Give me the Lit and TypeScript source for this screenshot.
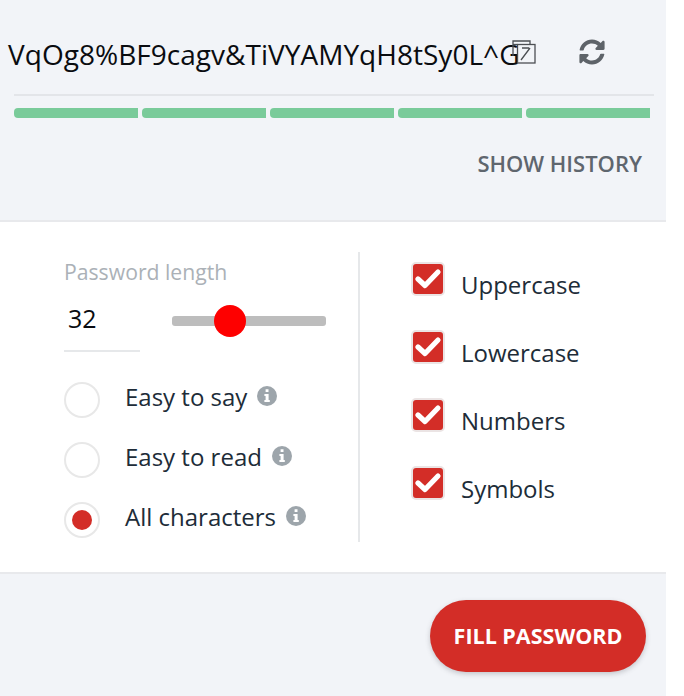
import { LitElement, html, css, svg } from "lit";
import { customElement } from "lit/decorators.js";

const info = html`<svg class="info" viewBox="0 0 20 20" aria-hidden="true">
  <circle cx="10" cy="10" r="10" fill="#9da5ab"></circle>
  <path fill="#fff" d="M8.6 3.2h2.9v2.9H8.6zM7.4 7.9h4.2v6.2h1.2v2H7.4v-2h1.2V9.900H7.400z"></path>
</svg>`;

const check = svg`<path d="M5 15 L12 21.500 L25 8" fill="none" stroke="#fff" stroke-width="5.2" stroke-linecap="round" stroke-linejoin="round"></path>`;

@customElement("app-root")
export class AppRoot extends LitElement {
  static styles = css`
    :host {
      display: block;
      width: 684px;
      height: 696px;
      background: #fff;
      font-family: "Open Sans", "Liberation Sans", sans-serif;
      overflow: hidden;
    }
    .panel { width: 666px; height: 696px; display: flex; flex-direction: column; }
    .head {
      height: 222px;
      box-sizing: border-box;
      background: #f2f4f8;
      border-bottom: 2px solid #e8e9ec;
      flex: none;
    }
    .pwrow { height: 94px; margin: 0 12px 0 14px; border-bottom: 2px solid #e3e5e9; position: relative; }
    .pw { position: absolute; left: -6px; top: 35px; font-size: 28px; letter-spacing: 0.03px; line-height: 38px; color: #0a0c10; white-space: nowrap; }
    .copy { position: absolute; left: 498px; top: 40px; width: 24px; height: 24px; }
    .refresh { position: absolute; left: 565px; top: 39px; width: 26px; height: 26px; }
    .bars { display: flex; gap: 4px; margin: 12px 16px 0 14px; }
    .bar { width: 124px; height: 10px; background: #7acb9a; border-radius: 4px 0 0 4px; }
    .hist {
      text-align: right; margin: 29px 24px 0 0; font-size: 22px; line-height: 32px;
      font-weight: 600; color: #5f666e;
    }
    .mid { height: 352px; flex: none; background: #fff; border-bottom: 2px solid #e8e9ec; box-sizing: border-box; display: flex; padding-top: 30px; }
    .left { width: 296px; margin-left: 64px; height: 290px; box-sizing: border-box; border-right: 2px solid #e6e8ea; }
    .label { font-size: 21.200px; line-height: 28px; color: #abb1b7; margin-top: 6px; white-space: nowrap; }
    .lenrow { display: flex; align-items: flex-start; height: 66px; }
    .len { width: 76px; height: 66px; box-sizing: border-box; border-bottom: 2px solid #e6e8ea; font-size: 25px; line-height: 36px; color: #0a0c10; padding-left: 4px; padding-top: 14px; flex: none; }
    .slider { margin-left: 32px; width: 154px; height: 10px; margin-top: 30px; background: #bdbdbd; border-radius: 3px; position: relative; flex: none; }
    .thumb { position: absolute; left: 42px; top: -11px; width: 32px; height: 32px; border-radius: 50%; background: #fe0000; }
    .radios { display: flex; flex-direction: column; margin-top: 30px; gap: 24px; }
    .radio { display: flex; align-items: center; height: 36px; font-size: 24px; color: #202c38; white-space: nowrap; }
    .dot { width: 36px; height: 36px; box-sizing: border-box; border: 2px solid #e8e8e8; border-radius: 50%; margin-right: 25px; flex: none; display: flex; align-items: center; justify-content: center; }
    .dot i { width: 20px; height: 20px; border-radius: 50%; background: #d32d27; display: block; }
    .radio span { position: relative; top: -4px; }
    .info { width: 20px; height: 20px; margin-left: 10px; position: relative; top: -4px; flex: none; }
    .right { display: flex; flex-direction: column; padding: 10px 0 0 51px; gap: 34px; }
    .ck { display: flex; height: 34px; font-size: 24px; color: #202c38; white-space: nowrap; }
    .box { width: 34px; height: 34px; box-sizing: border-box; border: 2px solid #ebe4e4; border-radius: 5px; background: #d32d27; flex: none; margin-right: 16px; }
    .box svg { display: block; width: 30px; height: 30px; }
    .ck span { line-height: 36px; margin-top: 5px; }
    .foot { flex: 1; background: #f2f4f8; display: flex; justify-content: flex-end; padding: 26px 20px 0 0; align-items: flex-start; }
    .fill {
      height: 72px; width: 216px; box-sizing: border-box; padding-bottom: 2px; border-radius: 36px; background: #d32d27; color: #fff;
      font-size: 21.500px; font-weight: 700; display: flex; align-items: center; justify-content: center;
      box-shadow: 0 2px 5px rgba(90, 90, 100, 0.3);
    }
  `;

  render() {
    return html`<div class="panel">
      <div class="head">
        <div class="pwrow">
          <div class="pw">VqOg8%BF9cagv&amp;TiVYAMYqH8tSy0L^G</div>
          <svg class="copy" viewBox="0 0 24 24" aria-hidden="true" fill="none" stroke="#4c4f53" stroke-width="1.300">
            <path d="M1 16V1h17v3"></path>
            <rect x="5.500" y="4.500" width="17.500" height="18.500"></rect>
            <path d="M1 4.500h4.500"></path>
            <path d="M9 20 L18 8 M10 8h7"></path>
          </svg>
          <svg class="refresh" viewBox="0 0 512 512" aria-hidden="true">
            <path fill="#5e6369" d="M370.7 133.3C339.500 104 298.900 88 255.800 88c-77.500.1-144.300 53.200-162.800 126.900-1.300 5.400-6.100 9.100-11.700 9.100H24.100c-7.500 0-13.200-6.800-11.800-14.200C33.900 94.900 134.800 8 256 8c66.400 0 126.800 26.100 171.300 68.700L463 41c15.100-15.100 41-4.400 41 17v134c0 13.300-10.700 24-24 24H345.900c-21.400 0-32.100-25.900-17-41l41.800-41.700zM32 296h134.100c21.400 0 32.100 25.900 17 41l-41.800 41.800c31.300 29.300 71.800 45.300 114.900 45.200 77.400-.1 144.300-53.100 162.800-126.800 1.300-5.400 6.100-9.100 11.700-9.100h57.300c7.500 0 13.200 6.800 11.800 14.200C478.100 417.100 377.200 504 256 504c-66.400 0-126.800-26.100-171.300-68.700L49 471c-15.100 15.100-41 4.400-41-17V320c0-13.300 10.700-24 24-24z"></path>
          </svg>
        </div>
        <div class="bars">
          <div class="bar"></div><div class="bar"></div><div class="bar"></div><div class="bar"></div><div class="bar"></div>
        </div>
        <div class="hist">SHOW HISTORY</div>
      </div>
      <div class="mid">
        <div class="left">
          <div class="label">Password length</div>
          <div class="lenrow">
            <div class="len">32</div>
            <div class="slider"><div class="thumb"></div></div>
          </div>
          <div class="radios">
            <div class="radio"><div class="dot"></div><span>Easy to say</span>${info}</div>
            <div class="radio"><div class="dot"></div><span>Easy to read</span>${info}</div>
            <div class="radio"><div class="dot"><i></i></div><span>All characters</span>${info}</div>
          </div>
        </div>
        <div class="right">
          ${["Uppercase", "Lowercase", "Numbers", "Symbols"].map(
            (t) => html`<div class="ck"><div class="box"><svg viewBox="0 0 30 30" aria-hidden="true">${check}</svg></div><span>${t}</span></div>`
          )}
        </div>
      </div>
      <div class="foot"><div class="fill">FILL PASSWORD</div></div>
    </div>`;
  }
}
